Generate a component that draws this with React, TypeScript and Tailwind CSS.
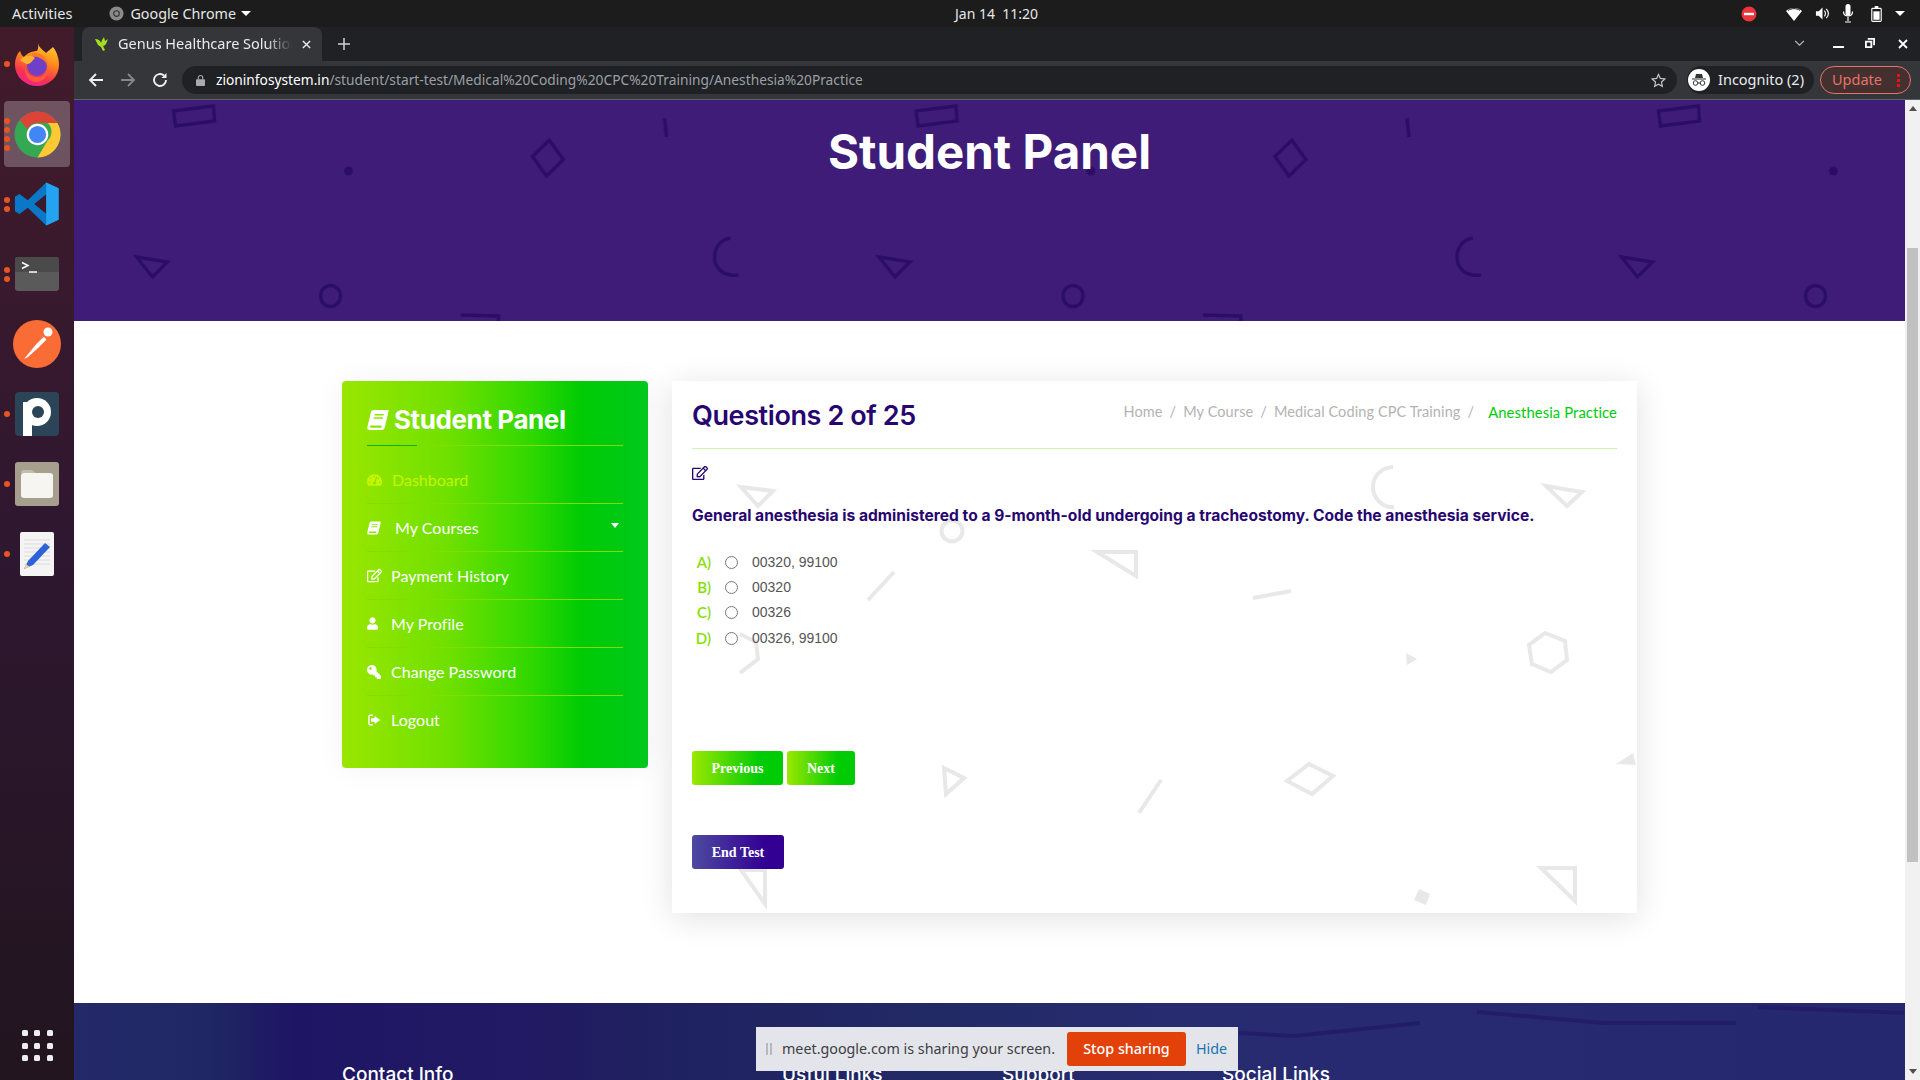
import { FaUser, FaKey, FaRegEdit, FaTachometerAlt } from "react-icons/fa";

const UBUNTU = "font-['Noto_Sans',sans-serif]";

function BookIcon({ className }: { className?: string }) {
	return (
		<svg viewBox="0 0 24 24" className={className} fill="currentColor">
			<path d="M7 1h15.500c.8 0 1.200.7 1 1.500L19.500 20c-.4 1.600-1.500 3-3.500 3H3c-2 0-3-1.600-2.600-3.400L4.400 3C4.800 1.800 5.800 1 7 1zm1.500 4.500-.4 1.500h10l.4-1.500h-10zm-1 3.500-.4 1.500h10l.4-1.500h-10zM3.400 18.500c-.3 1 .2 1.900 1.200 1.900h11.600c-.5-.7-.6-1.300-.4-2.400H4c-.3 0-.5.200-.6.500z" fillRule="evenodd" />
		</svg>
	);
}

function LogoutIcon({ className }: { className?: string }) {
	return (
		<svg viewBox="0 0 24 24" className={className} fill="currentColor">
			<path d="M2 6c0-2 1.500-3.500 3.500-3.500H10v2.500H5.500C4.900 5 4.500 5.400 4.500 6v12c0 .6.4 1 1 1H10v2.500H5.500C3.500 21.500 2 20 2 18V6z" />
			<path d="M13 5l10 7-10 7v-4H7V9h6V5z" />
		</svg>
	);
}

function Firefox() {
	return (
		<svg viewBox="0 0 44 44" className="w-[44px] h-[44px]">
			<defs>
				<linearGradient id="ffa" x1="0.7" y1="0" x2="0.35" y2="1">
					<stop offset="0" stopColor="#ffd02e" />
					<stop offset="0.4" stopColor="#ff8a1e" />
					<stop offset="0.75" stopColor="#f8344c" />
					<stop offset="1" stopColor="#ee2290" />
				</linearGradient>
			</defs>
			<path d="M23 0C23 5 28 8 31 11 33 9 36 7 38 5 42 10 44 17 44 23A22 21 0 1 1 0 23C0 17 2 12 5 9 6 12 7 14 9 15 12 11 18 9 22 9 24 6 23 3 23 0z" fill="url(#ffa)" />
			<circle cx="22" cy="24" r="10" fill="#6f3fc8" />
			<path d="M17 11C25 10 33 15 33 24 31 19 26 15 17 14z" fill="#ff7a20" />
			<path d="M5 18C8 14 15 12 20 16 17 19 15 22 13 22 10 22 8 20 5 18z" fill="#ffb030" />
			<path d="M10 24C11 32 18 36 25 35 30 34 33 30 33 26 34 34 28 40 21 40 14 40 9 33 10 24z" fill="#ff5a3a" />
		</svg>
	);
}

function Chrome() {
	return (
		<svg viewBox="0 0 48 48" className="w-[47px] h-[47px]">
			<circle cx="24" cy="24" r="23.500" fill="#34a853" />
			<path d="M24 .5A23.500 23.500 0 0 1 44.400 12.300H24a12 12 0 0 0-10.400 6L5.900 9.200A23.500 23.500 0 0 1 24 .5z" fill="#db4437" />
			<path d="M44.400 12.300A23.500 23.500 0 0 1 24 47.500l10.400-17.500a12 12 0 0 0 0-17.700z" fill="#fcc934" />
			<circle cx="24" cy="24" r="11" fill="#fff" />
			<circle cx="24" cy="24" r="8.800" fill="#4285f4" />
		</svg>
	);
}

function VsCode() {
	return (
		<svg viewBox="0 0 100 100" className="w-[46px] h-[46px]">
			<path d="M70 3 97 16v68L70 97 30 58 12 72 2 66V34l10-6 18 14L70 3zM70 29 44 50l26 21V29z" fill="#0a78c6" />
			<path d="M70 3 97 16v68L70 97V3z" fill="#24a4f0" />
		</svg>
	);
}

function Terminal() {
	return (
		<svg viewBox="0 0 44 34" className="w-[44px] h-[34px]">
			<rect width="44" height="34" rx="3" fill="#5a5a5a" />
			<path d="M0 3a3 3 0 0 1 3-3h38a3 3 0 0 1 3 3v12H0V3z" fill="#4a4a4a" />
			<path d="M7 5.500 13 8.500 7 11.500" stroke="#fff" strokeWidth="1.500" fill="none" />
			<path d="M14 15h8" stroke="#fff" strokeWidth="1.500" />
		</svg>
	);
}

function Postman() {
	return (
		<svg viewBox="0 0 48 48" className="w-[48px] h-[48px]">
			<circle cx="24" cy="24" r="24" fill="#fa6c35" />
			<path d="M11 39 30 16l4 4-19 17-4 2z" fill="#fff" />
			<circle cx="35" cy="12" r="4.500" fill="#fff" />
			<path d="M23 23l8-7M27 27l8-8" stroke="#fa6c35" strokeWidth="1.200" />
		</svg>
	);
}

function PApp() {
	return (
		<svg viewBox="0 0 44 44" className="w-[44px] h-[44px]">
			<rect width="44" height="44" rx="4" fill="#2c4457" />
			<path d="M8 10h9v34H8z" fill="#fff" />
			<circle cx="22" cy="20" r="14" fill="#fff" />
			<circle cx="23" cy="20" r="6" fill="#2c4457" />
		</svg>
	);
}

function Files() {
	return (
		<svg viewBox="0 0 44 44" className="w-[44px] h-[44px]">
			<rect width="44" height="44" rx="3" fill="#a79f8e" />
			<path d="M6 11a3 3 0 0 1 3-3h8l4 3H6z" fill="#c4bdae" />
			<rect x="6" y="11" width="32" height="25" rx="3" fill="#f6f5f2" />
		</svg>
	);
}

function Editor() {
	return (
		<svg viewBox="0 0 34 44" className="w-[34px] h-[44px]">
			<rect width="34" height="44" rx="2" fill="#f4f4f4" />
			<path d="M4 8h26M4 12h26M4 16h26M4 20h26M4 24h26M4 28h26M4 32h26" stroke="#dcdcdc" strokeWidth="1" />
			<path d="M4 37 8 29 25 11l5 4-17 18-9 4z" fill="#2d62d8" />
			<path d="M4 37l2-5 4 3-6 2z" fill="#eec9a0" />
		</svg>
	);
}

function DockItem({
	dots,
	active,
	children,
}: {
	dots: number;
	active?: boolean;
	children: React.ReactNode;
}) {
	return (
		<div className="relative h-[70px] flex items-center justify-center">
			<div className="absolute left-[4px] top-0 bottom-0 flex flex-col justify-center gap-[3px]">
				{Array.from({ length: dots }).map((_, i) => (
					<span key={i} className="w-[6px] h-[6px] rounded-full bg-[#e95420]" />
				))}
			</div>
			<div
				className={`w-[66px] h-[66px] rounded-[4px] flex items-center justify-center ${active ? "bg-white/25" : ""}`}
			>
				{children}
			</div>
		</div>
	);
}

function Dock() {
	return (
		<aside className="w-[74px] shrink-0 pt-[2px] pb-[19px] flex flex-col bg-[linear-gradient(180deg,#421b2a_0%,#2e1730_50%,#22151f_100%)]">
			<DockItem dots={1}>
				<Firefox />
			</DockItem>
			<DockItem dots={4} active>
				<Chrome />
			</DockItem>
			<DockItem dots={2}>
				<VsCode />
			</DockItem>
			<DockItem dots={2}>
				<Terminal />
			</DockItem>
			<DockItem dots={0}>
				<Postman />
			</DockItem>
			<DockItem dots={1}>
				<PApp />
			</DockItem>
			<DockItem dots={1}>
				<Files />
			</DockItem>
			<DockItem dots={1}>
				<Editor />
			</DockItem>
			<div className="mt-auto mx-auto grid grid-cols-3 gap-x-[6.500px] gap-y-[6.500px]">
				{Array.from({ length: 9 }).map((_, i) => (
					<span key={i} className="w-[6px] h-[6px] rounded-[1.500px] bg-[#eeeeee]" />
				))}
			</div>
		</aside>
	);
}

function TopBar() {
	return (
		<header className={`h-[27px] shrink-0 bg-[#1c1c1c] text-[#e6e6e6] text-[14.500px] flex items-center relative ${UBUNTU}`}>
			<span className="ml-[12px]">Activities</span>
			<svg viewBox="0 0 16 16" className="ml-[37px] w-[15px] h-[15px]">
				<circle cx="8" cy="8" r="7.500" fill="#8a8a8a" />
				<circle cx="8" cy="8" r="3" fill="none" stroke="#333" strokeWidth="1.200" />
			</svg>
			<span className="ml-[6px] text-[14.300px]">Google Chrome</span>
			<span className="ml-[5px] w-0 h-0 border-x-[5px] border-x-transparent border-t-[5px] border-t-white" />
			<span className="absolute left-[955px] whitespace-pre text-[14px]">Jan 14  11:20</span>
			<div className="ml-auto flex items-center mr-[15px]">
				<svg viewBox="0 0 16 16" className="w-[16px] h-[16px]">
					<circle cx="8" cy="8" r="7.500" fill="#ed333b" />
					<rect x="3" y="6.800" width="10" height="2.400" fill="#fff" />
				</svg>
				<svg viewBox="0 0 16 14" className="ml-[29px] w-[16px] h-[14px]">
					<path d="M8 14 0 4c4-4 12-4 16 0L8 14z" fill="#fff" />
					<path d="M2 3.500c3.500-2.500 8.500-2.500 12 0" stroke="#1c1c1c" strokeWidth="1" fill="none" />
				</svg>
				<svg viewBox="0 0 16 16" className="ml-[13px] w-[15px] h-[15px]">
					<path d="M1 5.500h3L8 1.500v13l-4-4H1v-5z" fill="#fff" />
					<path d="M10 5c1.500 1.500 1.500 4.500 0 6M12 3c2.800 3 2.800 7 0 10" stroke="#fff" strokeWidth="1.200" fill="none" />
				</svg>
				<svg viewBox="0 0 12 20" className="ml-[12px] w-[12px] h-[20px]">
					<rect x="3.500" y="0" width="5" height="12" rx="2.500" fill="#fff" />
					<path d="M1.500 7.500c0 6 9 6 9 0M6 13v4M3 18h6" stroke="#fff" strokeWidth="1.200" fill="none" />
				</svg>
				<svg viewBox="0 0 12 18" className="ml-[17px] w-[11px] h-[16px]">
					<rect x="0.700" y="2.700" width="10.600" height="14.600" rx="1" fill="none" stroke="#fff" strokeWidth="1.300" />
					<rect x="4" y="0" width="4" height="2.500" fill="#fff" />
					<rect x="2.500" y="6" width="7" height="9.500" fill="#fff" />
				</svg>
				<span className="ml-[13px] w-0 h-0 border-x-[5px] border-x-transparent border-t-[5px] border-t-white" />
			</div>
		</header>
	);
}

function ChromeBars() {
	return (
		<div className={`shrink-0 ${UBUNTU}`}>
			<div className="h-[34px] bg-[#202124] flex items-end relative">
				<div className="ml-[8px] w-[240px] h-[34px] bg-[#35363a] rounded-t-[8px] flex items-center text-[#e8eaed] text-[14.500px]">
					<svg viewBox="0 0 16 16" className="ml-[12px] w-[16px] h-[16px] shrink-0">
						<path d="M1 3c3 0 5 1 6 4l1-3 2-3 1 4 3-2-2 5c-1 1-2 2-3 2l2 4-2 1-2-4-3-2c-1-2-2-4-3-6z" fill="#a3e01c" />
					</svg>
					<span className="ml-[8px] w-[174px] overflow-hidden whitespace-nowrap [mask-image:linear-gradient(90deg,#000_85%,transparent)]">
						Genus Healthcare Solutions
					</span>
					<svg viewBox="0 0 10 10" className="ml-[10px] w-[9px] h-[9px]">
						<path d="M1 1l8 8M9 1l-8 8" stroke="#e8eaed" strokeWidth="1.600" />
					</svg>
				</div>
				<svg viewBox="0 0 12 12" className="ml-[16px] mb-[11px] w-[12px] h-[12px]">
					<path d="M6 0v12M0 6h12" stroke="#d0d2d6" strokeWidth="1.500" />
				</svg>
				<div className="ml-auto mr-[12px] mb-[12px] flex items-center">
					<svg viewBox="0 0 12 8" className="w-[11px] h-[7px]">
						<path d="M1 1l5 5 5-5" stroke="#b6b8bc" strokeWidth="1.400" fill="none" />
					</svg>
					<span className="ml-[28px] mt-[7px] w-[11px] h-[2px] bg-white" />
					<svg viewBox="0 0 11 12" className="ml-[21px] w-[10px] h-[11px]">
						<path d="M3 0h8v8H9V2H3V0z" fill="#fff" />
						<path d="M0 3h8v8H0V3zm2 2v4h4V5H2z" fill="#fff" fillRule="evenodd" />
					</svg>
					<svg viewBox="0 0 10 10" className="ml-[23px] w-[10px] h-[10px]">
						<path d="M1 1l8 8M9 1l-8 8" stroke="#fff" strokeWidth="1.800" />
					</svg>
				</div>
			</div>
			<div className="h-[39px] bg-[#35363a] border-b border-[#5f6063] flex items-center">
				<svg viewBox="0 0 16 16" className="ml-[14px] w-[16px] h-[16px]">
					<path d="M15 8H2M8 2 2 8l6 6" stroke="#f0f0f0" strokeWidth="1.800" fill="none" />
				</svg>
				<svg viewBox="0 0 16 16" className="ml-[16px] w-[16px] h-[16px]">
					<path d="M1 8h13M8 2l6 6-6 6" stroke="#85878b" strokeWidth="1.800" fill="none" />
				</svg>
				<svg viewBox="0 0 16 16" className="ml-[16px] w-[16px] h-[16px]">
					<path d="M14 8a6 6 0 1 1-2-4.500" stroke="#f0f0f0" strokeWidth="1.900" fill="none" />
					<path d="M14.500 1v5h-5z" fill="#f0f0f0" />
				</svg>
				<div className="ml-[14px] w-[1495px] h-[28px] rounded-full bg-[#202124] flex items-center">
					<svg viewBox="0 0 10 12" className="ml-[14px] w-[9px] h-[11px]">
						<rect y="4.500" width="10" height="7.500" rx="1" fill="#a8aaae" />
						<path d="M2.500 5V3a2.500 2.500 0 0 1 5 0v2" stroke="#a8aaae" strokeWidth="1.200" fill="none" />
					</svg>
					<span className="ml-[11px] text-[13.750px] text-[#9aa0a6] whitespace-nowrap">
						<span className="text-white">zioninfosystem.in</span>
						/student/start-test/Medical%20Coding%20CPC%20Training/Anesthesia%20Practice
					</span>
					<svg viewBox="0 0 16 16" className="ml-auto mr-[11px] w-[15px] h-[15px]">
						<path d="M8 1.500l2 4.300 4.700.6-3.500 3.200.9 4.700L8 12l-4.100 2.300.9-4.700L1.300 6.400 6 5.800l2-4.300z" stroke="#c4c6ca" strokeWidth="1.300" fill="none" />
					</svg>
				</div>
				<div className="ml-[10px] w-[127px] h-[28px] rounded-full bg-[#202124] flex items-center text-[#e8eaed] text-[14.500px]">
					<svg viewBox="0 0 22 22" className="ml-px w-[22px] h-[22px]">
						<circle cx="11" cy="11" r="11" fill="#fff" />
						<path d="M7 9l1-4h6l1 4zM4 9.500h14v1H4z" fill="#333" />
						<circle cx="7.500" cy="14" r="2.300" fill="none" stroke="#333" />
						<circle cx="14.500" cy="14" r="2.300" fill="none" stroke="#333" />
						<path d="M9.800 14h2.400" stroke="#333" />
					</svg>
					<span className="ml-[8px] -mt-[1px]">Incognito (2)</span>
				</div>
				<div className="ml-[6px] w-[91px] h-[28px] rounded-full border border-[#e57368] bg-[#43302f] flex items-center text-[#e57368] text-[14.500px]">
					<span className="ml-[11px] -mt-[1px]">Update</span>
					<span className="ml-auto mr-[10px] flex flex-col gap-[2px]">
						<span className="w-[3px] h-[3px] bg-[#e5121c]" />
						<span className="w-[3px] h-[3px] bg-[#e5121c]" />
						<span className="w-[3px] h-[3px] bg-[#e5121c]" />
					</span>
				</div>
			</div>
		</div>
	);
}

function BannerShapes() {
	return (
		<svg className="absolute inset-0 w-full h-full" aria-hidden="true">
			<defs>
				<pattern id="bannerTile" x="0" y="0" width="742.500" height="221" patternUnits="userSpaceOnUse">
					<g fill="none" stroke="#2b0d68" strokeWidth="3.500" transform="translate(-74.500 -100)">
						<path d="M174 111l40-5 1 15-39 5z" />
						<path d="M548 140l16 18-15 18-16-18z" transform="rotate(6 548 157)" />
						<path d="M137 257l31 5-15 15z" />
						<ellipse cx="331" cy="296" rx="10" ry="10.500" />
						<path d="M461 315l38 1 0 8" />
						<path d="M665 118l2 19" />
						<path d="M731 238c-12 2-16 12-16 19 0 12 10 20 24 18" />
						<circle cx="349" cy="171" r="4.500" fill="#2b0d68" stroke="none" />
					</g>
				</pattern>
			</defs>
			<rect width="100%" height="100%" fill="url(#bannerTile)" />
		</svg>
	);
}

function CardShapes() {
	return (
		<svg
			className="absolute inset-0 w-full h-full"
			viewBox="672 381 965 532"
			aria-hidden="true"
		>
			<g fill="none" stroke="#e8e8e8" strokeWidth="4">
				<path d="M741 487l32 4-15 15z" />
				<circle cx="952" cy="531" r="10.500" />
				<path d="M1097 552h39v24z" />
				<path d="M894 572l-26 28" />
				<path d="M1253 598l38-7" />
				<path d="M740 634l16 8 2 17-18 14" />
				<path d="M1393 467c-13 1-20 10-20 20s8 21 21 20" />
				<path d="M1546 486l36 6-15 14z" />
				<path d="M1545 633l20 8 2 19-16 12-19-8-3-19z" />
				<path d="M1309 764l24 12-21 18-25-13z" />
				<path d="M1161 780l-22 33" />
				<path d="M1541 868h34v33z" />
				<path d="M944 768l20 10-18 16z" />
				<path d="M741 870h24v34z" />
			</g>
			<path d="M1616 764l17-11 3 12zM1406 653l11 6-10 6zM1419 889l11 5-4 11-12-5z" fill="#e8e8e8" />
		</svg>
	);
}

const MENU = [
	{ label: "My Courses", icon: <BookIcon className="w-[14px] h-[14px]" />, gap: "ml-[14px]", caret: true },
	{ label: "Payment History", icon: <FaRegEdit className="w-[15px] h-[15px]" />, gap: "ml-[9px]" },
	{ label: "My Profile", icon: <FaUser className="w-[11px] h-[13px]" />, gap: "ml-[13px]" },
	{ label: "Change Password", icon: <FaKey className="w-[14px] h-[14px] -scale-x-100" />, gap: "ml-[10px]" },
	{ label: "Logout", icon: <LogoutIcon className="w-[14px] h-[14px]" />, gap: "ml-[10px]" },
];

function Sidebar() {
	return (
		<aside className="w-[306px] h-[387px] shrink-0 rounded-[4px] px-[25px] bg-[linear-gradient(90deg,#9ae600_0%,#6fe000_35%,#2fd800_62%,#00cb04_78%,#00c81e_100%)] shadow-[0_0_30px_rgba(0,0,0,0.05)] font-['Lato',sans-serif]">
			<h3 className="h-[65px] pt-[13px] flex items-center gap-[5px] text-white text-[26px] font-bold font-['Inter',sans-serif] tracking-[-0.400px] relative border-b border-[#7fdf00]">
				<BookIcon className="w-[22px] h-[22px]" />
				Student Panel
				<span className="absolute left-0 -bottom-px w-[50px] h-px bg-[#10b010]" />
			</h3>
			<a className="h-[58px] pt-[10px] flex items-center text-[#c6f500] text-[16px] border-b border-[#7fdf00]">
				<FaTachometerAlt className="w-[15px] h-[14px]" />
				<span className="ml-[10px]">Dashboard</span>
			</a>
			{MENU.map((item, i) => (
				<a
					key={item.label}
					className={`h-[48px] flex items-center text-white text-[16px] tracking-[0.050px] relative ${i < MENU.length - 1 ? "border-b border-[#7fdf00]" : ""}`}
				>
					{item.icon}
					<span className={item.gap}>{item.label}</span>
					{item.caret && (
						<span className="absolute right-[4px] top-[19px] w-0 h-0 border-x-[4.500px] border-x-transparent border-t-[5px] border-t-white" />
					)}
				</a>
			))}
		</aside>
	);
}

const OPTIONS = [
	{ key: "A)", text: "00320, 99100" },
	{ key: "B)", text: "00320" },
	{ key: "C)", text: "00326" },
	{ key: "D)", text: "00326, 99100" },
];

function QuestionCard() {
	return (
		<section className="relative w-[965px] h-[532px] shrink-0 bg-white shadow-[0_5px_30px_rgba(0,0,0,0.12)] px-[20px] font-['Lato',sans-serif]">
			<CardShapes />
			<div className="relative">
				<div className="h-[68px] flex items-center justify-between border-b border-[#cdf7ae]">
					<h2 className="text-[27px] font-semibold text-[#27066f] font-['Inter',sans-serif] tracking-[-0.400px] mt-[3px]">
						Questions 2 of 25
					</h2>
					<nav className="text-[14.500px] tracking-[0.100px] text-[#b3b3b3] -mt-[4px] flex">
						<span>Home</span>
						<span className="mx-[7px]">/</span>
						<span>My Course</span>
						<span className="mx-[7px]">/</span>
						<span>Medical Coding CPC Training</span>
						<span className="ml-[7px] mr-[14px]">/</span>
						<span className="text-[#00cc0a] text-[14.800px]">Anesthesia Practice</span>
					</nav>
				</div>
				<FaRegEdit className="mt-[16px] w-[16px] h-[16px] text-[#27066f]" />
				<p className="mt-[25px] text-[15.600px] leading-[20px] font-bold text-[#27066f] font-['Inter',sans-serif]">
					General anesthesia is administered to a 9-month-old undergoing a tracheostomy. Code the anesthesia service.
				</p>
				<div className="mt-[24px] text-[14px] font-['Liberation_Sans',sans-serif]">
					{OPTIONS.map((o, i) => (
						<label
							key={o.key}
							className={`h-[25px] flex items-center ${i === 3 ? "mt-px" : ""}`}
						>
							<span className="w-[19px] text-right text-[#85e000] font-['Lato',sans-serif] font-semibold text-[15px]">
								{o.key}
							</span>
							<input type="radio" name="answer" className="ml-[14px] w-[13px] h-[13px] m-0" />
							<span className="ml-[14px] text-[#555555]">{o.text}</span>
						</label>
					))}
				</div>
				<div className="mt-[100px] flex gap-[4px] font-['Liberation_Serif',serif] font-bold text-[14px] text-white">
					<button className="w-[91px] h-[34px] rounded-[3px] bg-[linear-gradient(90deg,#9be800,#00cb04_75%)]">
						Previous
					</button>
					<button className="w-[68px] h-[34px] rounded-[3px] bg-[linear-gradient(90deg,#9be800,#00cb04_75%)]">
						Next
					</button>
				</div>
				<button className="mt-[50px] w-[92px] h-[34px] rounded-[3px] font-['Liberation_Serif',serif] font-bold text-[14px] text-white bg-[linear-gradient(90deg,#4d4aa0,#320093_80%)]">
					End Test
				</button>
			</div>
		</section>
	);
}

function FooterStreaks() {
	return (
		<svg
			className="absolute inset-0 w-full h-full"
			viewBox="74 1003 1831 200"
			aria-hidden="true"
		>
			<g fill="none" stroke="#231a68" strokeWidth="4" opacity="0.8">
				<path d="M1239 1033l55 3 126-13" />
				<path d="M1477 1012l127 11h132" />
				<path d="M1758 1007l146 6" />
			</g>
		</svg>
	);
}

function Footer() {
	return (
		<footer className="relative h-[200px] shrink-0 pl-[268px] pt-[58px] text-white text-[19px] font-medium font-['Inter',sans-serif] bg-[linear-gradient(90deg,#242969_0%,#1f2864_7%,#1e1664_12%,#221a63_25%,#1f2260_33%,#222a66_48%,#272b70_60%,#26286f_100%)]">
			<FooterStreaks />
			<div className="relative flex">
				<h4 className="w-[440px]">Contact Info</h4>
				<h4 className="w-[220px]">Usful Links</h4>
				<h4 className="w-[220px]">Support</h4>
				<h4>Social Links</h4>
			</div>
		</footer>
	);
}

function ScreenShareBar() {
	return (
		<div className={`absolute left-[756px] top-[1027px] w-[482px] h-[44px] bg-[#e4e5ea] flex items-center text-[14.300px] ${UBUNTU}`}>
			<span className="ml-[10px] w-[6px] h-[12px] border-x-2 border-[#b8b9bd]" />
			<span className="ml-[10px] text-[#3c4043] whitespace-nowrap">meet.google.com is sharing your screen.</span>
			<button className="absolute left-[311px] w-[119px] h-[34px] rounded-[3px] bg-[#e2410a] text-white font-medium">
				Stop sharing
			</button>
			<span className="absolute left-[440px] text-[#1a73b0]">Hide</span>
		</div>
	);
}

export default function App() {
	return (
		<div className="relative h-[1080px] w-[1920px] overflow-hidden flex flex-col bg-white">
			<TopBar />
			<div className="flex-1 min-h-0 flex">
				<Dock />
				<div className="flex-1 min-w-0 flex flex-col">
					<ChromeBars />
					<div className="flex-1 min-h-0 flex">
						<main className="flex-1 min-w-0 overflow-hidden flex flex-col">
							<div className="relative h-[221px] shrink-0 bg-[#3e1c78] flex justify-center">
								<BannerShapes />
								<h1 className="relative mt-[22px] text-[47.500px] leading-[60px] font-bold text-white font-['Inter',sans-serif]">
									Student Panel
								</h1>
							</div>
							<div className="h-[682px] shrink-0 pl-[268px] pt-[60px] flex items-start gap-[24px]">
								<Sidebar />
								<QuestionCard />
							</div>
							<Footer />
						</main>
						<div className="w-[15px] shrink-0 bg-[#f1f1f1] flex flex-col items-center">
							<span className="mt-[6px] w-0 h-0 border-x-[4px] border-x-transparent border-b-[5px] border-b-[#505050]" />
							<span className="mt-[137px] w-[11px] h-[614px] bg-[#c1c1c1]" />
							<span className="mt-auto mb-[6px] w-0 h-0 border-x-[4px] border-x-transparent border-t-[5px] border-t-[#505050]" />
						</div>
					</div>
				</div>
			</div>
			<ScreenShareBar />
		</div>
	);
}
